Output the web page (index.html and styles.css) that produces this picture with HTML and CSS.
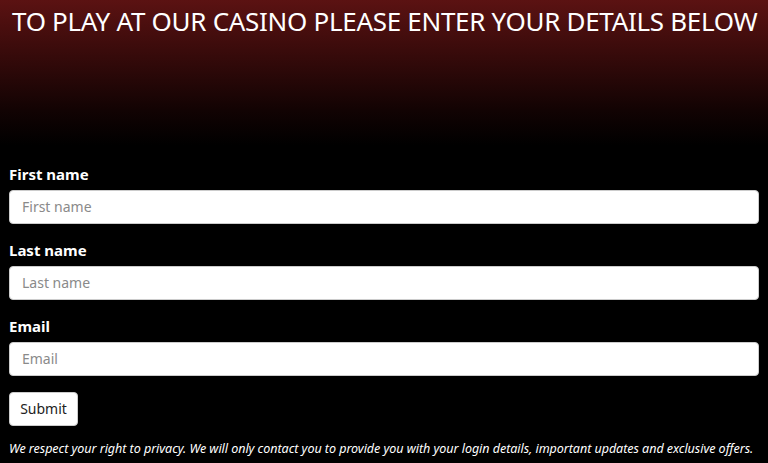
FILE: index.html
```html
<!DOCTYPE html>
<html>
<head>
<meta charset="utf-8">
<link rel="stylesheet" href="styles.css">
</head>
<body>
<div class="page">
  <header class="hero">
    <h1 class="title">TO PLAY AT OUR CASINO PLEASE ENTER YOUR DETAILS BELOW</h1>
  </header>
  <form class="form">
    <div class="field">
      <label class="label" for="fn">First name</label>
      <input class="input" id="fn" type="text" placeholder="First name">
    </div>
    <div class="field">
      <label class="label" for="ln">Last name</label>
      <input class="input" id="ln" type="text" placeholder="Last name">
    </div>
    <div class="field">
      <label class="label" for="em">Email</label>
      <input class="input" id="em" type="email" placeholder="Email">
    </div>
    <button class="submit" type="button">Submit</button>
    <p class="privacy">We respect your right to privacy. We will only contact you to provide you with your login details, important updates and exclusive offers.</p>
  </form>
</div>
</body>
</html>
```
FILE: styles.css
```css
html, body {
  margin: 0;
  padding: 0;
  background: #000;
}
body {
  font-family: "Noto Sans", "Open Sans", sans-serif;
  color: #fff;
}
.page {
  width: 768px;
  min-height: 463px;
  background: linear-gradient(to bottom, #5b1212 0px, #3a0b0b 50px, #120303 110px, #000 145px, #000 100%);
}
.hero {
  height: 150px;
  padding: 4px 0 0 12px;
  box-sizing: border-box;
}
.title {
  margin: 0;
  font-weight: 400;
  font-size: 26px;
  line-height: 34px;
  letter-spacing: -0.3px;
  color: #fff;
}
.form {
  padding: 13.5px 9px 0 9px;
  display: flex;
  flex-direction: column;
}
.field {
  display: flex;
  flex-direction: column;
  margin-bottom: 16px;
}
.label {
  font-weight: 700;
  font-size: 15px;
  line-height: 20px;
  margin-bottom: 6px;
}
.input {
  height: 34px;
  box-sizing: border-box;
  border: 1px solid #ccc;
  border-radius: 4px;
  background: #fff;
  padding: 0 12px;
  font-family: inherit;
  font-size: 14px;
  color: #333;
}
.input::placeholder {
  color: #8a8a8a;
}
.submit {
  align-self: flex-start;
  width: 69px;
  height: 34px;
  border: 1px solid #ccc;
  border-radius: 4px;
  background: #fff;
  color: #222;
  font-family: inherit;
  font-size: 14px;
  padding: 0;
}
.privacy {
  margin: 13px 0 0 0;
  font-style: italic;
  font-size: 12.55px;
  line-height: 20px;
  letter-spacing: -0.05px;
  white-space: nowrap;
  color: #fff;
}
```
